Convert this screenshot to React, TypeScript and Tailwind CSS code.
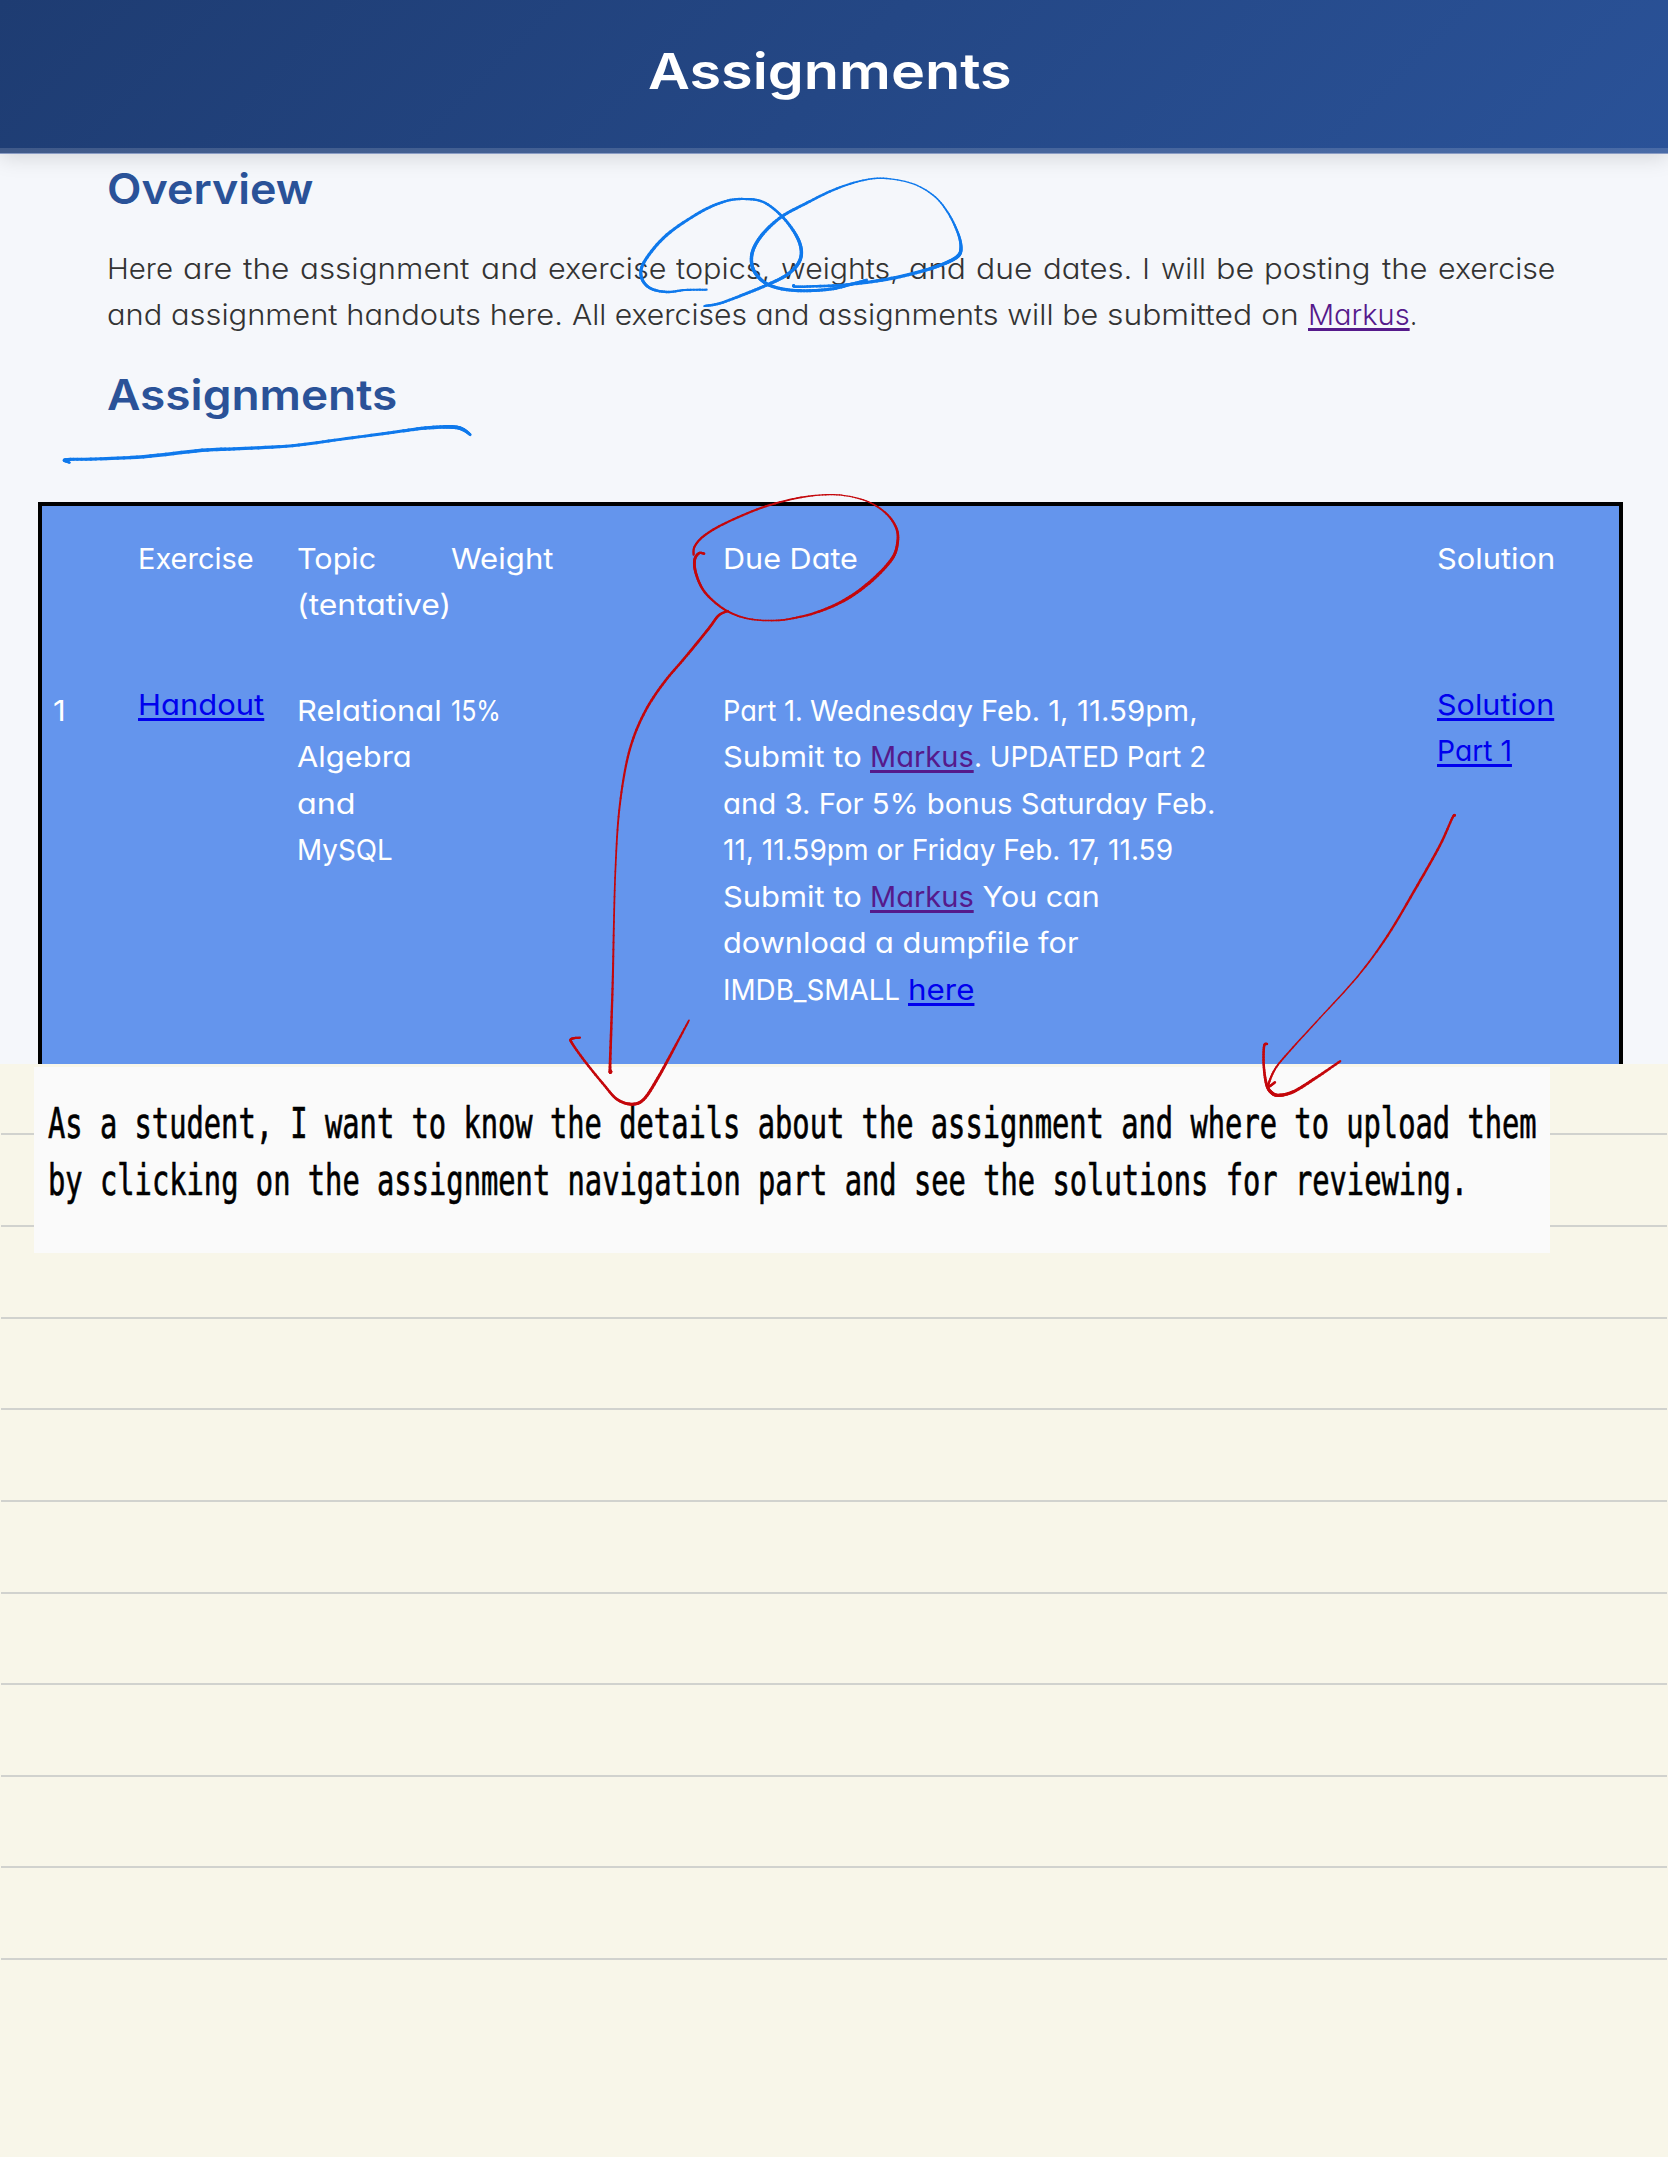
import { useLayoutEffect, useRef, useState } from "react";

type Pt = [number, number, number];

/** Text run stretched horizontally to an exact width. */
function Fit({ w, children, className = "" }: { w: number; children: string; className?: string }) {
  const ref = useRef<HTMLSpanElement>(null);
  const [k, setK] = useState(1);
  useLayoutEffect(() => {
    if (ref.current) setK(w / ref.current.offsetWidth);
  }, [w]);
  return (
    <span className="inline-block shrink-0 whitespace-pre" style={{ width: w }}>
      <span ref={ref} className={`inline-block origin-left whitespace-pre ${className}`} style={{ transform: `scaleX(${k})` }}>
        {children}
      </span>
    </span>
  );
}

const LINK = "text-[#0000ee] underline decoration-[2.5px] underline-offset-[3px]";
const VISITED = "text-[#551a8b] underline decoration-[2.5px] underline-offset-[3px]";

type Seg = [string, number, string?];

function Row({ segs }: { segs: Seg[] }) {
  return (
    <div className="flex h-[46.5px]">
      {segs.map(([t, w, c], i) => (
        <Fit key={i} w={w} className={c}>
          {t}
        </Fit>
      ))}
    </div>
  );
}

/** Pen stroke with a width at every point, smoothed by a Catmull-Rom spline. */
function Ink({ pts, ox, oy, sx, sy, color }: { pts: Pt[]; ox: number; oy: number; sx: number; sy: number; color: string }) {
  const p = pts.map(([x, y, w]) => [ox + x / sx, oy + y / sy, w]);
  const out: number[][] = [];
  const n = 8;
  for (let i = 0; i < p.length - 1; i++) {
    const a = p[Math.max(0, i - 1)];
    const b = p[i];
    const c = p[i + 1];
    const d = p[Math.min(p.length - 1, i + 2)];
    for (let s = 0; s < n; s++) {
      const t = s / n;
      const f = (j: number) =>
        0.5 * (2 * b[j] + (c[j] - a[j]) * t + (2 * a[j] - 5 * b[j] + 4 * c[j] - d[j]) * t * t + (3 * b[j] - a[j] - 3 * c[j] + d[j]) * t * t * t);
      out.push([f(0), f(1), b[2] + (c[2] - b[2]) * t]);
    }
  }
  out.push(p[p.length - 1]);
  return (
    <g stroke={color} strokeLinecap="round">
      {out.slice(1).map((q, i) => (
        <line key={i} x1={out[i][0]} y1={out[i][1]} x2={q[0]} y2={q[1]} strokeWidth={((out[i][2] + q[2]) / 2) * 1.1} />
      ))}
    </g>
  );
}

const topicsLoop: Pt[] = [[320, 389, 1.9], [255, 390, 2], [200, 396, 2.2], [148, 383, 2.6], [123, 347, 2.8], [136, 300, 2.8], [200, 225, 2.8], [300, 157, 2.6], [375, 124, 2.2], [432, 117, 2], [490, 126, 2.2], [545, 168, 2.4], [588, 225, 2.9], [604, 272, 3.1], [595, 310, 3.1], [560, 345, 3], [505, 373, 2.8], [440, 400, 2.6], [360, 430, 2.4], [313, 438, 2]];
const weightsLoop: Pt[] = [[581, 375, 2], [586, 380, 2.2], [640, 379, 2.3], [740, 374, 2.6], [860, 358, 3], [960, 335, 3], [1030, 312, 3.1], [1073, 289, 3.3], [1083, 262, 2.9], [1073, 217, 2.2], [1042, 155, 1.7], [1000, 106, 1.3], [935, 70, 1.2], [850, 55, 1.3], [780, 63, 1.6], [700, 90, 2.1], [620, 129, 2.5], [545, 170, 2.8], [490, 220, 3], [460, 268, 3.1], [455, 310, 3.1], [470, 345, 3.1], [505, 374, 3], [560, 389, 2.9], [630, 392, 2.8], [700, 386, 2.7], [760, 371, 2.7], [800, 360, 2.5]];
const headingUnderline: Pt[] = [[131, 1388, 2], [123, 1379, 2.8], [180, 1377, 2.8], [270, 1370, 3.2], [380, 1351, 3.2], [450, 1346, 3], [550, 1337, 2.8], [640, 1318, 2.6], [730, 1299, 2.6], [800, 1284, 3.1], [850, 1281, 3.5], [870, 1288, 3.2], [884, 1304, 2.5]];
const dueCircle: Pt[] = [[460, 175, 2], [445, 174, 2.2], [433, 190, 2.6], [436, 220, 2.5], [456, 260, 2.2], [490, 291, 2], [530, 314, 1.8], [580, 329, 1.5], [640, 334, 1.4], [700, 330, 1.7], [780, 313, 2.2], [860, 282, 2.8], [930, 238, 3], [985, 188, 2.8], [1001, 150, 2.5], [998, 115, 2.2], [970, 80, 1.8], [920, 52, 1.2], [860, 38, 1.1], [800, 35, 1.2], [720, 43, 1.5], [620, 66, 1.9], [520, 102, 2], [460, 132, 2], [433, 158, 1.9], [430, 178, 1.7]];
const dueArrow: Pt[] = [[526, 311, 2], [500, 322, 2.2], [475, 350, 2.4], [440, 387, 2.4], [400, 428, 2.3], [350, 478, 2.3], [300, 541, 2.3], [262, 612, 2.2], [238, 690, 2], [220, 800, 1.7], [211, 930, 1.5], [207, 1050, 1.6], [204, 1180, 1.9], [200, 1290, 2.2], [196, 1395, 2.5], [198, 1406, 3.2]];
const dueArrowHead: Pt[] = [[112, 1325, 1.9], [88, 1328, 2.2], [91, 1340, 2.2], [130, 1386, 2.2], [180, 1438, 2.2], [215, 1471, 2.4], [255, 1483, 2.7], [290, 1472, 2.7], [330, 1421, 2.7], [375, 1351, 2.3], [417, 1284, 1.6]];
const solutionArrow: Pt[] = [[1000, 797, 1.8], [993, 803, 2.1], [960, 868, 2.2], [900, 963, 2.3], [820, 1083, 2], [740, 1180, 1.4], [640, 1278, 1.3], [560, 1356, 1.5], [520, 1400, 1.8], [502, 1440, 2.2], [520, 1431, 2.2]];
const solutionArrowHead: Pt[] = [[499, 1340, 2], [491, 1345, 2.2], [490, 1390, 2.2], [497, 1435, 2.6], [510, 1455, 3], [530, 1462, 3], [570, 1453, 2.8], [630, 1420, 2.6], [694, 1381, 2]];

function Annotations() {
  const blue = "#0f79ec";
  const red = "#c4070b";
  return (
    <svg className="pointer-events-none absolute left-0 top-0" width="1668" height="2157" fill="none">
      <Ink pts={topicsLoop} ox={600} oy={160} sx={3} sy={3} color={blue} />
      <Ink pts={weightsLoop} ox={600} oy={160} sx={3} sy={3} color={blue} />
      <Ink pts={headingUnderline} ox={0} oy={0} sx={1.88} sy={3} color={blue} />
      <Ink pts={dueCircle} ox={540} oy={480} sx={2.8} sy={2.376} color={red} />
      <Ink pts={dueArrow} ox={540} oy={480} sx={2.8} sy={2.376} color={red} />
      <Ink pts={dueArrowHead} ox={540} oy={480} sx={2.8} sy={2.376} color={red} />
      <Ink pts={solutionArrow} ox={1080} oy={480} sx={2.667} sy={2.376} color={red} />
      <Ink pts={solutionArrowHead} ox={1080} oy={480} sx={2.667} sy={2.376} color={red} />
    </svg>
  );
}

const introWords: Seg[] = [["Here", 66], ["are", 49], ["the", 47], ["assignment", 170], ["and", 57], ["exercise", 118], ["topics,", 94], ["weights,", 118], ["and", 57], ["due", 56], ["dates.", 89], ["I", 8], ["will", 45], ["be", 38], ["posting", 107], ["the", 46], ["exercise", 117]];

const RULES = [1133, 1225, 1316.5, 1408, 1500, 1591.5, 1683, 1774.5, 1866, 1957.5];

export default function App() {
  return (
    <div className="relative flex h-[2157px] w-[1668px] flex-col overflow-hidden bg-[#f8f6e9] font-['Inter',sans-serif] [font-feature-settings:'cv11','calt'_0]">
      <section className="h-[1063.5px] shrink-0 overflow-hidden bg-[#f5f7fb]">
        <header className="relative flex h-[154px] flex-col bg-[linear-gradient(135deg,#1e3c72_0%,#2a5298_100%)] shadow-[0_4px_20px_rgba(0,0,0,0.13)]">
          <h1 className="flex h-[148px] justify-center pr-[8px] text-[50px] font-semibold leading-[142px] text-white">
            <Fit w={364}>Assignments</Fit>
          </h1>
          <div className="h-[6px] border-b border-[#8a9cc4] bg-white/15" />
        </header>

        <main className="pl-[107px] text-[29px] leading-[46.5px]">
          <h2 className="mt-[5px] h-[60px] text-[42px] font-semibold leading-[60px] text-[#2a5298]">
            <Fit w={206}>Overview</Fit>
          </h2>
          <div className="mt-[26.5px] font-light text-[#333333]">
            <div className="flex h-[46.5px] w-[1448px] justify-between">
              {introWords.map(([t, w], i) => (
                <Fit key={i} w={w}>
                  {t}
                </Fit>
              ))}
            </div>
            <Row
              segs={[
                ["and assignment handouts here. ", 465],
                ["All exercises and ", 246],
                ["assignments will be ", 289],
                ["submitted on ", 201],
                ["Markus", 102, VISITED],
                [".", 7],
              ]}
            />
          </div>
          <h2 className="mt-[26.5px] h-[60px] text-[42px] font-semibold leading-[60px] text-[#2a5298]">
            <Fit w={290}>Assignments</Fit>
          </h2>
        </main>

        <div className="ml-[38px] mt-[76.5px] h-[600px] w-[1585px] border-[4px] border-black bg-[#6495ed] pt-[30px] text-[29px] leading-[46.5px] text-white">
          <div className="grid h-[152px] grid-cols-[96px_159px_154px_272px_714px_1fr]">
            <div />
            <Row segs={[["Exercise", 116]]} />
            <div>
              <Row segs={[["Topic", 79]]} />
              <Row segs={[["(tentative)", 154]]} />
            </div>
            <Row segs={[["Weight", 102]]} />
            <Row segs={[["Due Date", 135]]} />
            <Row segs={[["Solution", 118]]} />
          </div>
          <div className="grid grid-cols-[96px_159px_154px_272px_714px_1fr]">
            <div className="pl-[11px]">
              <Row segs={[["1", 13]]} />
            </div>
            <div className="-mt-[6px]">
              <Row segs={[["Handout", 126, LINK]]} />
            </div>
            <div>
              <Row segs={[["Relational", 145]]} />
              <Row segs={[["Algebra", 115]]} />
              <Row segs={[["and", 59]]} />
              <Row segs={[["MySQL", 96]]} />
            </div>
            <Row segs={[["15%", 50]]} />
            <div>
              <Row segs={[["Part 1. ", 87], ["Wednesday Feb. 1, ", 267], ["11.59pm,", 121]]} />
              <Row segs={[["Submit to ", 147], ["Markus", 104, VISITED], [". UPDATED Part 2", 232]]} />
              <Row segs={[["and 3. For 5% bonus Saturday Feb.", 493]]} />
              <Row segs={[["11, 11.59pm or Friday Feb. 17, 11.59", 450]]} />
              <Row segs={[["Submit to ", 147], ["Markus", 104, VISITED], [" You can", 126]]} />
              <Row segs={[["download a dumpfile for", 356]]} />
              <Row segs={[["IMDB_SMALL ", 185], ["here", 66, LINK]]} />
            </div>
            <div className="-mt-[6px]">
              <Row segs={[["Solution", 117, LINK]]} />
              <Row segs={[["Part 1", 75, LINK]]} />
            </div>
          </div>
        </div>
      </section>

      <section className="relative flex-1">
        {RULES.map((y) => (
          <div key={y} className="absolute left-px right-px h-[2px] bg-[#d1d2ce]" style={{ top: y - 1063.5 }} />
        ))}
        <div className="relative ml-[34px] mt-[3.5px] h-[186px] w-[1516px] bg-[#fafafa] pl-[14px] pt-[28px] font-['DejaVu_Sans_Mono',monospace] text-[42.5px] leading-[57.4px] text-black [-webkit-text-stroke:0.7px_black]">
          <div className="h-[57.4px]">
            <Fit w={1489}>As a student, I want to know the details about the assignment and where to upload them</Fit>
          </div>
          <div className="h-[57.4px]">
            <Fit w={1420}>by clicking on the assignment navigation part and see the solutions for reviewing.</Fit>
          </div>
        </div>
      </section>

      <Annotations />
    </div>
  );
}
